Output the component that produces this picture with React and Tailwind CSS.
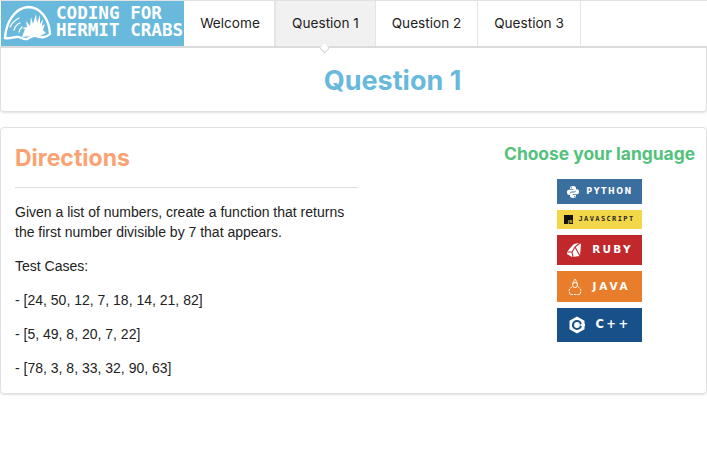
import React from 'react';

const navItems = [
  { label: 'Welcome', width: 'w-[91px]', pad: 'pl-[2px]' },
  { label: 'Question 1', width: 'w-[101px]', active: true },
  { label: 'Question 2', width: 'w-[102px]' },
  { label: 'Question 3', width: 'w-[103px]' },
];

const testCases = ['[24, 50, 12, 7, 18, 14, 21, 82]', '[5, 49, 8, 20, 7, 22]', '[78, 3, 8, 33, 32, 90, 63]'];

const Logo = () => (
  <div className="flex h-[45px] w-[183px] shrink-0 items-center overflow-hidden bg-[#68b9dc]">
    <svg width="55" height="45" viewBox="0 0 55 45" className="shrink-0" fill="none" stroke="white" strokeLinecap="round">
      <path d="M4 37C5 21 14 7 27 6c12 0 21 11 22 27-4 4-10 4-14 2-4-1-6 2-9 3-4 1-7-3-11-2-3 0-7 2-11 1z" strokeWidth="2.4" />
      <path d="M9 26c2-4 5-7 9-9M13 29c1-3 3-6 6-7M18 31c0-2 1-3 3-5" strokeWidth="1.3" />
      <path
        d="M21 36l3-8-3-1 5-1-1-6 4 5 1-9 2 7 3-10 1 9 3-8 0 9 3-5-1 7 3-2-2 6 3 3-6 3H30z"
        fill="white"
        stroke="none"
      />
    </svg>
    <div className="-mt-[3px] font-['DejaVu_Sans_Mono',monospace] text-[17.6px] leading-[17px] font-bold whitespace-nowrap text-white">
      <div>CODING FOR</div>
      <div>HERMIT CRABS</div>
    </div>
  </div>
);

const Badge = ({ bg, height, text, textClass, gap, children }) => (
  <div className={`flex w-[85px] items-center justify-center ${bg} ${height} ${gap}`}>
    {children}
    <span className={`font-['DejaVu_Sans',sans-serif] font-bold ${textClass}`}>{text}</span>
  </div>
);

export default function App() {
  return (
    <div className="h-[475px] w-[707px] overflow-hidden bg-white font-['Liberation_Sans',sans-serif] text-[14px] text-[#222]">
      {/* Top nav */}
      <div className="flex h-[48px] border-t border-b-2 border-t-[#e2e2e2] border-b-[#dcdcdc] pl-[1px]">
        <Logo />
        {navItems.map((item) => (
          <div
            key={item.label}
            className={`relative flex items-center justify-center border-r border-[#e4e4e4] pb-[1px] font-['Inter',sans-serif] text-[13.6px] text-[#222] ${item.width} ${item.pad || ''} ${item.active ? 'border-l bg-[#f1f1f1]' : ''}`}
          >
            {item.label}
            {item.active && (
              <div className="absolute top-[44px] left-[45px] h-[7px] w-[7px] rotate-45 border-r border-b border-[#d4d4d4] bg-white" />
            )}
          </div>
        ))}
      </div>

      {/* Page title */}
      <div className="flex h-[64px] items-center justify-center rounded-b-[4px] border border-t-0 border-[#e0e0e0] pt-[3px] pl-[78px] shadow-[0_1px_2px_rgba(0,0,0,0.12)]">
        <h1 className="font-['Inter',sans-serif] text-[27px] font-bold text-[#68b9dc]">Question 1</h1>
      </div>

      {/* Main card */}
      <div className="mt-[15px] flex h-[267px] rounded-[4px] border border-[#e0e0e0] shadow-[0_1px_2px_rgba(0,0,0,0.12)]">
        <div className="ml-[14px] w-[343px] shrink-0">
          <h2 className="mt-[15px] font-['Inter',sans-serif] text-[23px] leading-[30px] font-bold text-[#fba272]">Directions</h2>
          <hr className="mt-[14px] border-[#dedede]" />
          <p className="mt-[14px] leading-[20px]">
            Given a list of numbers, create a function that returns the first number divisible by 7 that appears.
          </p>
          <p className="mt-[14px] leading-[20px]">Test Cases:</p>
          {testCases.map((testCase) => (
            <p key={testCase} className="mt-[14px] leading-[20px]">
              - {testCase}
            </p>
          ))}
        </div>

        <div className="ml-auto flex w-[200px] flex-col items-center pr-[13px]">
          <h3 className="mt-[15px] font-['Inter',sans-serif] text-[17.4px] leading-[22px] font-bold whitespace-nowrap text-[#53c27b]">
            Choose your language
          </h3>
          <div className="mt-[14px] flex flex-col gap-[6px]">
            <Badge bg="bg-[#3a6e9f]" height="h-[25px]" text="PYTHON" textClass="text-[8px] tracking-[1.5px] text-white" gap="gap-[6px]">
              <svg width="14" height="14" viewBox="0 0 14 14" fill="white">
                <path d="M7 1C4.8 1 4 1.7 4 3v1h3.4v.7H2.800C1.400 4.700 1 5.800 1 7.200s.5 2.600 1.800 2.600H4V8.400c0-1 .8-1.800 1.800-1.800h2.600c.9 0 1.600-.7 1.600-1.600V3c0-1.300-1.200-2-3-2zM5.400 2.100a.6.600 0 1 1 0 1.200.6.600 0 0 1 0-1.200z" />
                <path d="M7 13c2.200 0 3-.7 3-2v-1H6.600v-.7h4.600c1.400 0 1.800-1.100 1.800-2.500s-.5-2.600-1.800-2.600H10v1.400c0 1-.8 1.800-1.800 1.800H5.600C4.700 7.400 4 8.100 4 9v2c0 1.300 1.200 2 3 2zm1.600-1.100a.6.600 0 1 1 0-1.200.6.600 0 0 1 0 1.200z" />
              </svg>
            </Badge>
            <div className="flex h-[19px] w-[85px] items-center justify-center gap-[5px] bg-[#f4d748]">
              <div className="flex h-[9px] w-[9px] items-end justify-end bg-[#111] pr-[1px] font-['DejaVu_Sans',sans-serif] text-[4px] leading-[5px] font-bold text-[#f4d748]">JS</div>
              <span className="font-['DejaVu_Sans_Mono',monospace] text-[7px] tracking-[1.4px] font-bold text-[#2b2b2b]">JAVASCRIPT</span>
            </div>
            <Badge bg="bg-[#c0282b]" height="h-[30px]" text="RUBY" textClass="text-[10.500px] tracking-[2.200px] text-white" gap="gap-[10px]">
              <svg width="16" height="16" viewBox="0 0 16 16" fill="white">
                <path d="M1 10 5 5l3-3 5-1 2 1-1 12-8 1-5-3z" />
                <path d="M1 10l5 0 3-5M6 10l1 5M9 5l5 9M9 5l5-4" fill="none" stroke="#c0282b" strokeWidth="1.1" />
              </svg>
            </Badge>
            <Badge bg="bg-[#e87e2c]" height="h-[31px]" text="JAVA" textClass="text-[10.500px] tracking-[2.800px] text-white" gap="gap-[10px]">
              <svg width="14" height="18" viewBox="0 0 14 18" fill="none" stroke="white" strokeWidth="0.9">
                <path d="M4.500 6.500c.3-2 1.500-3.500 2.500-5.500 1 2 2.200 3.500 2.500 5.500" />
                <circle cx="7" cy="7" r="2.500" />
                <path d="M4 8.500 1 12l1 4.500h10l1-4.500-3-3.500" strokeDasharray="2.500 .8" />
              </svg>
            </Badge>
            <Badge bg="bg-[#185189]" height="h-[34px]" text="C++" textClass="text-[11.500px] tracking-[2.400px] text-white" gap="gap-[11px]">
              <svg width="16" height="18" viewBox="0 0 16 18" fill="none">
                <path d="M8 .500 15.500 4.800v8.400L8 17.500.500 13.200V4.800z" fill="white" />
                <circle cx="8" cy="9" r="4" stroke="#185189" strokeWidth="2.200" />
                <path d="M11.500 7.800h4.500v2.400h-4.500z" fill="white" />
              </svg>
            </Badge>
          </div>
        </div>
      </div>
    </div>
  );
}
